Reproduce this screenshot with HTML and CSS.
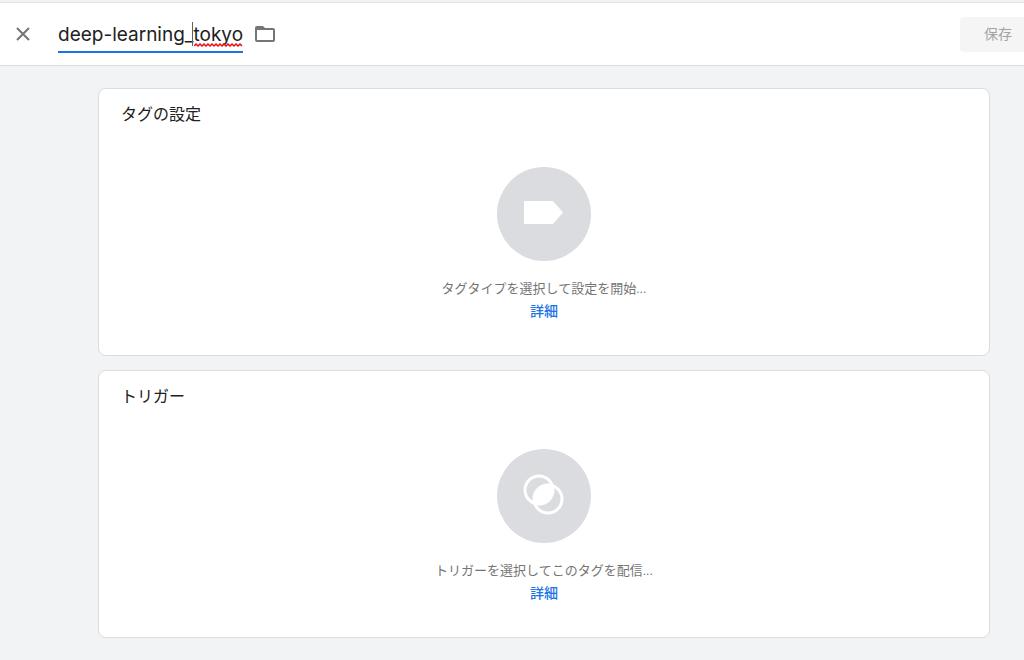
FILE: index.html
```html
<!DOCTYPE html>
<html lang="ja">
<head>
  <meta charset="UTF-8">
  <meta name="viewport" content="width=device-width, initial-scale=1.0">
  <title>タグの設定</title>
  <link rel="stylesheet" href="styles.css">
</head>
<body>
  <header class="header">
    <button class="icon-button close-button" type="button" aria-label="閉じる">
      <svg width="14" height="14" viewBox="0 0 14 14">
        <path d="M1 1L13 13M13 1L1 13" fill="none" stroke="#757575" stroke-width="2"/>
      </svg>
    </button>
    <div class="name-field">
      <input class="name-input" type="text" value="deep-learning_tokyo" aria-label="タグの名前" spellcheck="false">
      <span class="caret"></span>
      <svg class="squiggle" width="49" height="4" viewBox="0 0 49 4">
        <path d="M0 3L2 1L4 3L6 1L8 3L10 1L12 3L14 1L16 3L18 1L20 3L22 1L24 3L26 1L28 3L30 1L32 3L34 1L36 3L38 1L40 3L42 1L44 3L46 1L48 3" fill="none" stroke="#e8131b" stroke-width="1.5"/>
      </svg>
    </div>
    <button class="icon-button" type="button" aria-label="フォルダ">
      <svg width="20" height="16" viewBox="0 0 20 16">
        <path d="M2 0H8L10 2H18Q20 2 20 4V14Q20 16 18 16H2Q0 16 0 14V2Q0 0 2 0ZM2 4V14H18V4Z" fill="#757575" fill-rule="evenodd"/>
      </svg>
    </button>
    <button class="save-button" type="button" disabled>保存</button>
  </header>

  <main class="content">
    <section class="card">
      <h2 class="card-title">タグの設定</h2>
      <div class="placeholder">
        <svg class="placeholder-icon" width="94" height="94" viewBox="0 0 94 94">
          <circle cx="47" cy="47" r="47" fill="#dadce0"/>
          <path d="M27 34H56L66 45.500L56 57H27Z" fill="#fff"/>
        </svg>
        <p class="placeholder-text">タグタイプを選択して設定を開始...</p>
        <a class="details-link" href="#">詳細</a>
      </div>
    </section>

    <section class="card">
      <h2 class="card-title">トリガー</h2>
      <div class="placeholder">
        <svg class="placeholder-icon" width="94" height="94" viewBox="0 0 94 94">
          <circle cx="47" cy="47" r="47" fill="#dadce0"/>
          <g fill="none" stroke="#fff" stroke-width="3">
            <circle cx="42" cy="41" r="14"/>
            <circle cx="51" cy="50" r="14"/>
          </g>
          <path d="M55.400 36.600A14 14 0 0 1 37.600 54.400A14 14 0 0 1 55.400 36.600Z" fill="#fff"/>
        </svg>
        <p class="placeholder-text">トリガーを選択してこのタグを配信...</p>
        <a class="details-link" href="#">詳細</a>
      </div>
    </section>
  </main>
</body>
</html>
```
FILE: styles.css
```css
* {
  box-sizing: border-box;
}

body {
  margin: 0;
  background-color: #f1f3f4;
  color: #212121;
  font-family: Roboto, "Noto Sans CJK JP", sans-serif;
}

.header {
  display: flex;
  align-items: center;
  height: 64px;
  margin-top: 2px;
  padding-left: 16px;
  background-color: #fff;
  border-top: 1px solid #dfe1e4;
  border-bottom: 1px solid #dadce0;
}

.icon-button {
  display: flex;
  padding: 0;
  border: none;
  background: none;
  cursor: pointer;
}

.close-button {
  margin-right: 28px;
}

.name-field {
  position: relative;
  width: 185px;
  height: 32px;
  margin-top: 6px;
  margin-right: 12px;
}

.name-input {
  width: 100%;
  height: 100%;
  padding: 0 0 4px;
  border: none;
  border-bottom: 2px solid #1a73e8;
  outline: none;
  background: none;
  color: #212121;
  font-family: Inter, sans-serif;
  font-size: 19px;
}

.caret {
  position: absolute;
  top: 1px;
  left: 134px;
  width: 1px;
  height: 24px;
  background-color: #616161;
}

.squiggle {
  position: absolute;
  right: 0;
  bottom: 6px;
}

.save-button {
  height: 35px;
  margin-left: auto;
  padding: 0 12px 2px 24px;
  border: none;
  border-radius: 4px 0 0 4px;
  background-color: #f5f5f5;
  color: #a3a3a3;
  font-family: "Noto Sans CJK JP", sans-serif;
  font-size: 14px;
}

.content {
  display: flex;
  flex-direction: column;
  gap: 14px;
  padding: 22px 34px 22px 98px;
}

.card {
  padding: 14px 22px 32px;
  background-color: #fff;
  border: 1px solid #dadce0;
  border-radius: 8px;
}

.card-title {
  margin: 0;
  font-size: 16px;
  font-weight: 400;
  line-height: 24px;
}

.placeholder {
  display: flex;
  flex-direction: column;
  align-items: center;
  margin-top: 40px;
}

.placeholder-text {
  margin: 18px 0 0;
  color: #757575;
  font-size: 13px;
  line-height: 20px;
}

.details-link {
  color: #1a73e8;
  font-size: 14px;
  font-weight: 500;
  line-height: 24px;
  text-decoration: none;
}
```
